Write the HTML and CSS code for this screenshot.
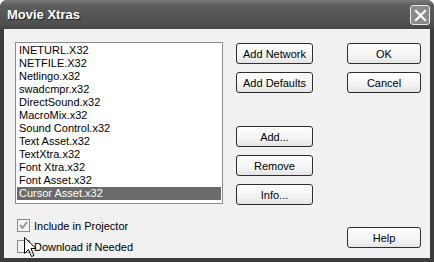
FILE: index.html
```html
<!DOCTYPE html>
<html lang="en">
<head>
  <meta charset="UTF-8">
  <title>Movie Xtras</title>
  <link rel="stylesheet" href="styles.css">
</head>
<body>
  <div class="window">
    <div class="titlebar">
      <span class="title">Movie Xtras</span>
      <span class="close">
        <svg width="13" height="13" viewBox="0 0 13 13"><path d="M2 2 L11 11 M11 2 L2 11" stroke="#fff" stroke-width="2.2" stroke-linecap="square"/></svg>
      </span>
    </div>
    <div class="client">
      <div class="left">
        <ul class="listbox">
          <li>INETURL.X32</li>
          <li>NETFILE.X32</li>
          <li>Netlingo.x32</li>
          <li>swadcmpr.x32</li>
          <li>DirectSound.x32</li>
          <li>MacroMix.x32</li>
          <li>Sound Control.x32</li>
          <li>Text Asset.x32</li>
          <li>TextXtra.x32</li>
          <li>Font Xtra.x32</li>
          <li>Font Asset.x32</li>
          <li class="selected">Cursor Asset.x32</li>
        </ul>
        <label class="check"><span class="box checked"><svg width="11" height="11" viewBox="0 0 11 11"><path d="M2 5 L4.5 8 L9 2" fill="none" stroke="#999" stroke-width="2"/></svg></span>Include in Projector</label>
        <label class="check second"><span class="box"></span>Download if Needed</label>
      </div>
      <div class="buttons">
        <button>Add Network</button>
        <button>Add Defaults</button>
        <button class="spaced">Add...</button>
        <button>Remove</button>
        <button>Info...</button>
      </div>
      <div class="buttons right">
        <button>OK</button>
        <button>Cancel</button>
        <button class="help">Help</button>
      </div>
      <svg class="cursor" width="13" height="21" viewBox="0 0 13 21"><path d="M0.5 0.5 L0.5 16.5 L4.5 12.5 L7.5 19.5 L10 18.5 L7 11.5 L12 11.5 Z" fill="#fff" stroke="#000" stroke-width="1"/></svg>
    </div>
  </div>
</body>
</html>
```

FILE: styles.css
```css
body {
  margin: 0;
  background: #fff;
  font-family: "Liberation Sans", Arial, sans-serif;
}
.window {
  width: 434px;
  height: 262px;
  background: #3c3c3c;
  border-radius: 7px 7px 0 0;
  box-sizing: border-box;
  padding: 0 4px 4px 4px;
  display: flex;
  flex-direction: column;
}
.titlebar {
  height: 29px;
  display: flex;
  align-items: center;
  justify-content: space-between;
  margin: 0 -4px;
  padding: 0 4px 0 7px;
  border-radius: 7px 7px 0 0;
  background: linear-gradient(#7a7a7a, #5c5c5c 20%, #505050 80%, #464646);
}
.title {
  color: #fff;
  font-weight: bold;
  font-size: 13px;
  text-shadow: 1px 1px 0 #222;
}
.close {
  width: 18px;
  height: 18px;
  border: 1px solid #e8e8e8;
  border-radius: 3px;
  background: #8a8a8a;
  display: flex;
  align-items: center;
  justify-content: center;
  margin-top: 1px;
}
.client {
  flex: 1;
  background: #f1f1f1;
  display: flex;
  padding: 13px 0 0 11px;
  position: relative;
}
.left {
  width: 208px;
  display: flex;
  flex-direction: column;
}
.listbox {
  list-style: none;
  margin: 0;
  padding: 1px;
  height: 158px;
  background: #fff;
  border: 1px solid #8c8c8c;
  font-size: 11px;
  color: #000;
}
.listbox li {
  height: 13px;
  line-height: 13px;
  padding-left: 2px;
  white-space: nowrap;
}
.listbox .selected {
  background: #6b6b6b;
  color: #fff;
}
.check {
  display: flex;
  align-items: center;
  font-size: 11px;
  margin: 15px 0 0 2px;
  height: 13px;
}
.check.second {
  margin-top: 8px;
}
.box {
  width: 11px;
  height: 11px;
  border: 1px solid #8a8a8a;
  background: #f4f4f4;
  margin-right: 4px;
  display: flex;
}
.buttons {
  display: flex;
  flex-direction: column;
  gap: 8px;
  margin: 1px 0 0 13px;
  width: 77px;
}
.buttons.right {
  margin-left: 34px;
  width: 74px;
}
button {
  height: 21px;
  padding: 0;
  font-family: "Liberation Sans", Arial, sans-serif;
  font-size: 11px;
  color: #000;
  border: 1px solid #2e2e2e;
  border-radius: 3px;
  background: linear-gradient(#ffffff, #f4f4f4 60%, #e4e4e4);
}
.spaced {
  margin-top: 25px;
}
.help {
  margin-top: 126px;
}
.cursor {
  position: absolute;
  left: 20px;
  top: 208px;
}
```
